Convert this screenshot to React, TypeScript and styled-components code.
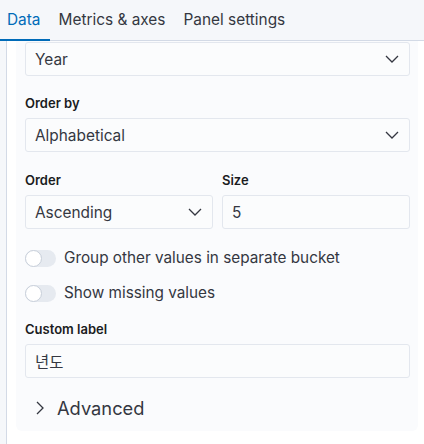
import React, { useState } from 'react';
import styled, { createGlobalStyle } from 'styled-components';

const GlobalStyle = createGlobalStyle`
  html, body {
    margin: 0;
    padding: 0;
    background: #fff;
  }
  body {
    font-family: Inter, "Noto Sans", "Noto Sans CJK KR", sans-serif;
    color: #343741;
  }
`;

const Page = styled.div`
  width: 424px;
  height: 444px;
  display: flex;
  flex-direction: column;
  overflow: hidden;
`;

const TabBar = styled.div`
  height: 40px;
  flex-shrink: 0;
  display: flex;
  align-items: stretch;
  background: #f5f7fa;
  border-bottom: 1px solid #d3dae6;
`;

const Tab = styled.div<{ $active?: boolean }>`
  display: flex;
  align-items: center;
  padding: 0 9px 3px 7px;
  margin-right: 2px;
  margin-bottom: -1px;
  font-size: 15.4px;
  color: ${(p) => (p.$active ? '#006bb8' : '#343741')};
  box-shadow: ${(p) => (p.$active ? 'inset 0 -2px 0 #006bb8' : 'none')};
`;

const Body = styled.div`
  flex: 1;
  display: flex;
  min-height: 0;
`;

const Rail = styled.div`
  width: 6px;
  background: #f5f7fa;
  border-right: 1px solid #d3dae6;
`;

const Content = styled.div`
  flex: 1;
  padding: 0 6px 0 9px;
`;

const Panel = styled.div`
  background: #fafbfd;
  border-radius: 0 0 6px 6px;
  padding: 1px 8px 11px 9px;
`;

const Row = styled.div<{ $top?: number }>`
  margin-top: ${(p) => p.$top ?? 0}px;
`;

const Split = styled.div`
  display: grid;
  grid-template-columns: 188px 1fr;
  gap: 9px;
  margin-top: 18px;
`;

const Label = styled.div`
  font-size: 13px;
  font-weight: 600;
  line-height: 20px;
  color: #1a1c21;
  margin-bottom: 5px;
`;

const Field = styled.div`
  height: 34px;
  box-sizing: border-box;
  border: 1px solid #e3e7ee;
  border-radius: 3px;
  background: #fbfcfd;
  display: flex;
  align-items: center;
  justify-content: space-between;
  padding: 0 10px 0 9px;
  font-size: 15.4px;
  color: #343741;
`;

const Chevron = () => (
  <svg width="14" height="8" viewBox="0 0 14 8" fill="none">
    <path d="M1 1l6 6 6-6" stroke="#343741" strokeWidth="1.3" />
  </svg>
);

const SwitchRow = styled.label<{ $top: number }>`
  display: flex;
  align-items: center;
  gap: 8px;
  margin-top: ${(p) => p.$top}px;
  font-size: 15.3px;
  line-height: 20px;
  color: #343741;
  cursor: pointer;
`;

const Track = styled.span<{ $on: boolean }>`
  position: relative;
  width: 31px;
  height: 17px;
  border-radius: 9px;
  background: ${(p) => (p.$on ? '#006bb8' : '#e6eaf0')};
  flex-shrink: 0;
`;

const Knob = styled.span<{ $on: boolean }>`
  position: absolute;
  top: 0;
  left: ${(p) => (p.$on ? '14px' : '0')};
  width: 17px;
  height: 17px;
  box-sizing: border-box;
  border-radius: 50%;
  background: #fff;
  border: 1px solid #c8cfda;
`;

const Accordion = styled.div`
  display: flex;
  align-items: center;
  gap: 13px;
  margin-top: 18px;
  padding-left: 11px;
  font-size: 18.3px;
  line-height: 24px;
  color: #343741;
`;

function Toggle({ label, top }: { label: string; top: number }) {
  const [on, setOn] = useState(false);
  return (
    <SwitchRow $top={top} onClick={() => setOn(!on)}>
      <Track $on={on}>
        <Knob $on={on} />
      </Track>
      {label}
    </SwitchRow>
  );
}

export default function App() {
  return (
    <Page>
      <GlobalStyle />
      <TabBar>
        <Tab $active>Data</Tab>
        <Tab>Metrics &amp; axes</Tab>
        <Tab>Panel settings</Tab>
      </TabBar>
      <Body>
        <Rail />
        <Content>
          <Panel>
            <Field>
              Year
              <Chevron />
            </Field>
            <Row $top={17}>
              <Label>Order by</Label>
              <Field>
                Alphabetical
                <Chevron />
              </Field>
            </Row>
            <Split>
              <div>
                <Label>Order</Label>
                <Field>
                  Ascending
                  <Chevron />
                </Field>
              </div>
              <div>
                <Label>Size</Label>
                <Field>5</Field>
              </div>
            </Split>
            <Toggle top={19} label="Group other values in separate bucket" />
            <Toggle top={15} label="Show missing values" />
            <Row $top={16}>
              <Label>Custom label</Label>
              <Field>년도</Field>
            </Row>
            <Accordion>
              <svg width="8" height="14" viewBox="0 0 8 14" fill="none">
                <path d="M1 1l6 6-6 6" stroke="#343741" strokeWidth="1.3" />
              </svg>
              Advanced
            </Accordion>
          </Panel>
        </Content>
      </Body>
    </Page>
  );
}
